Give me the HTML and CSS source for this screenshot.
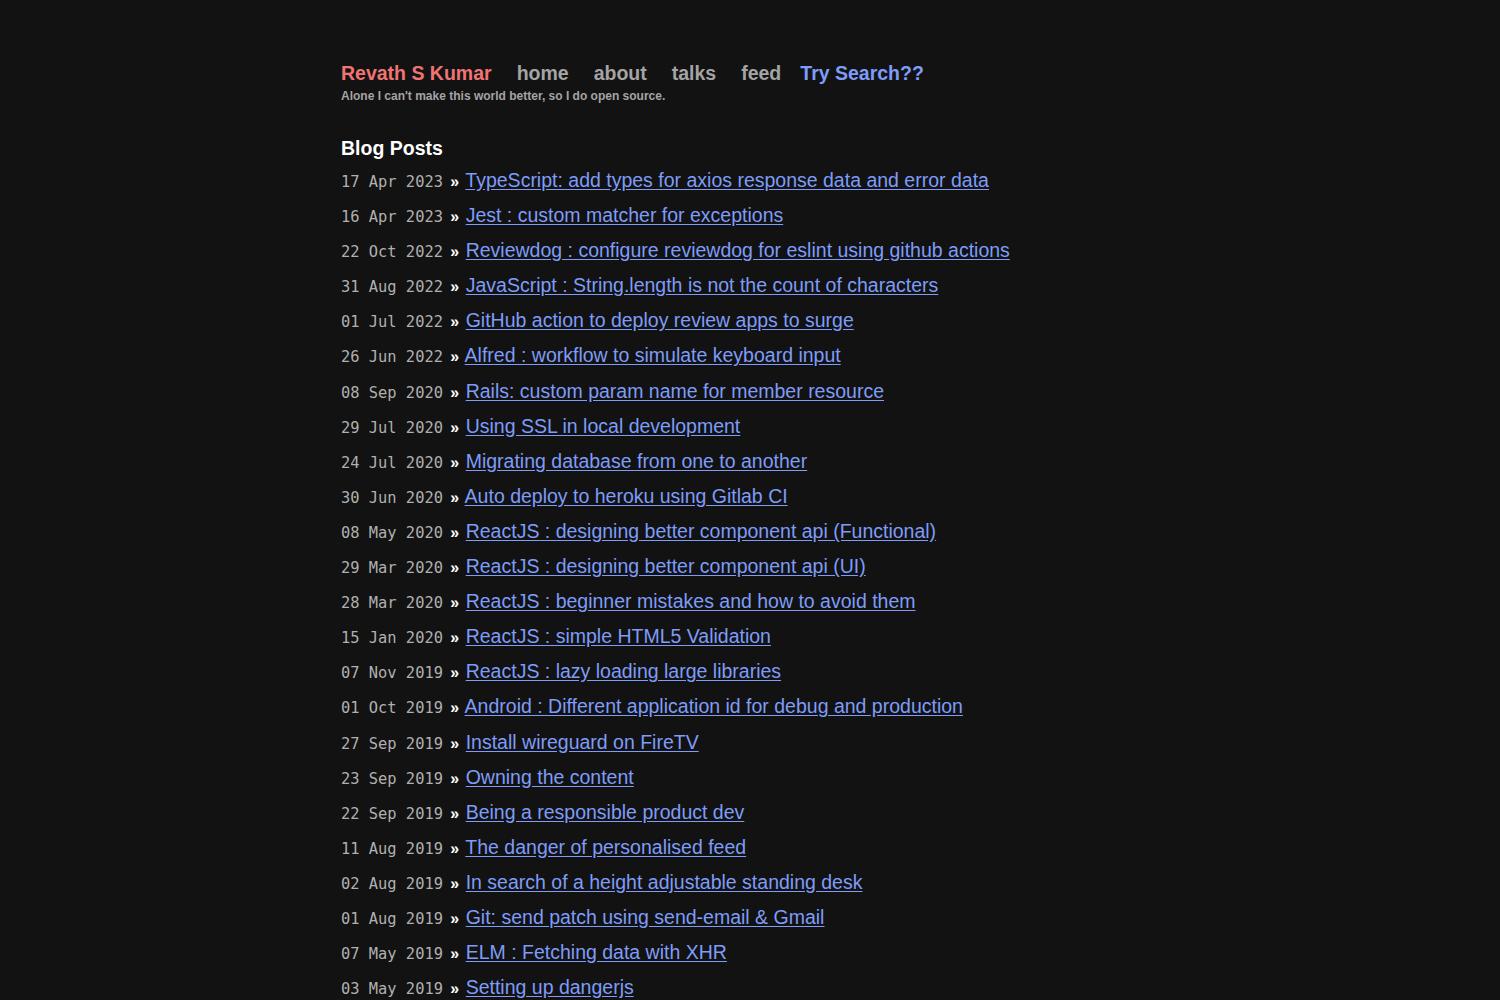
FILE: index.html
```html
<!DOCTYPE html>
<html>
<head>
<meta charset="utf-8">
<title>Revath S Kumar</title>
<link rel="stylesheet" href="styles.css">
</head>
<body>
<div class="page">
  <header class="header">
    <nav class="nav">
      <a class="brand" href="#">Revath S Kumar</a>
      <a class="nav-link" href="#">home</a>
      <a class="nav-link" href="#">about</a>
      <a class="nav-link" href="#">talks</a>
      <a class="nav-link" href="#">feed</a>
      <a class="search" href="#">Try Search??</a>
    </nav>
    <div class="tagline">Alone I can't make this world better, so I do open source.</div>
  </header>
  <h2 class="heading">Blog Posts</h2>
  <ul class="posts">
    <li><span class="date">17 Apr 2023</span> <span class="sep">»</span> <a href="#">TypeScript: add types for axios response data and error data</a></li>
    <li><span class="date">16 Apr 2023</span> <span class="sep">»</span> <a href="#">Jest : custom matcher for exceptions</a></li>
    <li><span class="date">22 Oct 2022</span> <span class="sep">»</span> <a href="#">Reviewdog : configure reviewdog for eslint using github actions</a></li>
    <li><span class="date">31 Aug 2022</span> <span class="sep">»</span> <a href="#">JavaScript : String.length is not the count of characters</a></li>
    <li><span class="date">01 Jul 2022</span> <span class="sep">»</span> <a href="#">GitHub action to deploy review apps to surge</a></li>
    <li><span class="date">26 Jun 2022</span> <span class="sep">»</span> <a href="#">Alfred : workflow to simulate keyboard input</a></li>
    <li><span class="date">08 Sep 2020</span> <span class="sep">»</span> <a href="#">Rails: custom param name for member resource</a></li>
    <li><span class="date">29 Jul 2020</span> <span class="sep">»</span> <a href="#">Using SSL in local development</a></li>
    <li><span class="date">24 Jul 2020</span> <span class="sep">»</span> <a href="#">Migrating database from one to another</a></li>
    <li><span class="date">30 Jun 2020</span> <span class="sep">»</span> <a href="#">Auto deploy to heroku using Gitlab CI</a></li>
    <li><span class="date">08 May 2020</span> <span class="sep">»</span> <a href="#">ReactJS : designing better component api (Functional)</a></li>
    <li><span class="date">29 Mar 2020</span> <span class="sep">»</span> <a href="#">ReactJS : designing better component api (UI)</a></li>
    <li><span class="date">28 Mar 2020</span> <span class="sep">»</span> <a href="#">ReactJS : beginner mistakes and how to avoid them</a></li>
    <li><span class="date">15 Jan 2020</span> <span class="sep">»</span> <a href="#">ReactJS : simple HTML5 Validation</a></li>
    <li><span class="date">07 Nov 2019</span> <span class="sep">»</span> <a href="#">ReactJS : lazy loading large libraries</a></li>
    <li><span class="date">01 Oct 2019</span> <span class="sep">»</span> <a href="#">Android : Different application id for debug and production</a></li>
    <li><span class="date">27 Sep 2019</span> <span class="sep">»</span> <a href="#">Install wireguard on FireTV</a></li>
    <li><span class="date">23 Sep 2019</span> <span class="sep">»</span> <a href="#">Owning the content</a></li>
    <li><span class="date">22 Sep 2019</span> <span class="sep">»</span> <a href="#">Being a responsible product dev</a></li>
    <li><span class="date">11 Aug 2019</span> <span class="sep">»</span> <a href="#">The danger of personalised feed</a></li>
    <li><span class="date">02 Aug 2019</span> <span class="sep">»</span> <a href="#">In search of a height adjustable standing desk</a></li>
    <li><span class="date">01 Aug 2019</span> <span class="sep">»</span> <a href="#">Git: send patch using send-email &amp; Gmail</a></li>
    <li><span class="date">07 May 2019</span> <span class="sep">»</span> <a href="#">ELM : Fetching data with XHR</a></li>
    <li><span class="date">03 May 2019</span> <span class="sep">»</span> <a href="#">Setting up dangerjs</a></li>
    <li><span class="date">28 Apr 2019</span> <span class="sep">»</span> <a href="#">Serverless : Deploying to multiple stages</a></li>
  </ul>
</div>
</body>
</html>
```

FILE: styles.css
```css
html, body {
  margin: 0;
  padding: 0;
  background: #121212;
}
body {
  font-family: "Liberation Sans", Arial, sans-serif;
  color: #e8e8e8;
}
.page {
  width: 818px;
  margin: 0 auto;
  padding-top: 60px;
}
.nav {
  display: flex;
  align-items: baseline;
  gap: 25px;
  font-weight: bold;
  font-size: 19.5px;
  line-height: 26px;
}
.nav a {
  text-decoration: none;
}
.brand {
  color: #f07473;
}
.nav-link {
  color: #a4a4a4;
}
.search {
  color: #7e9cf8;
  margin-left: -6px;
}
.tagline {
  font-size: 12px;
  font-weight: bold;
  color: #a4a4a4;
  margin-top: 2px;
  line-height: 16px;
}
.heading {
  font-size: 19.5px;
  font-weight: bold;
  color: #ffffff;
  margin: 31px 0 0 0;
  line-height: 26px;
}
.posts {
  list-style: none;
  margin: 2px 0 0 0;
  padding: 0;
}
.posts li {
  font-size: 19.5px;
  line-height: 35.1px;
  height: 35.1px;
  white-space: nowrap;
}
.posts li > * {
  line-height: 1;
}
.date {
  font-family: "DejaVu Sans Mono", "Liberation Mono", monospace;
  font-size: 15.4px;
  color: #b0b0b0;
}
.sep {
  color: #ffffff;
  font-weight: bold;
  font-size: 16px;
  margin: 0 1px 0 2px;
}
.posts a {
  color: #7e9cf8;
  text-decoration: underline;
  text-underline-offset: 2px;
}
```
